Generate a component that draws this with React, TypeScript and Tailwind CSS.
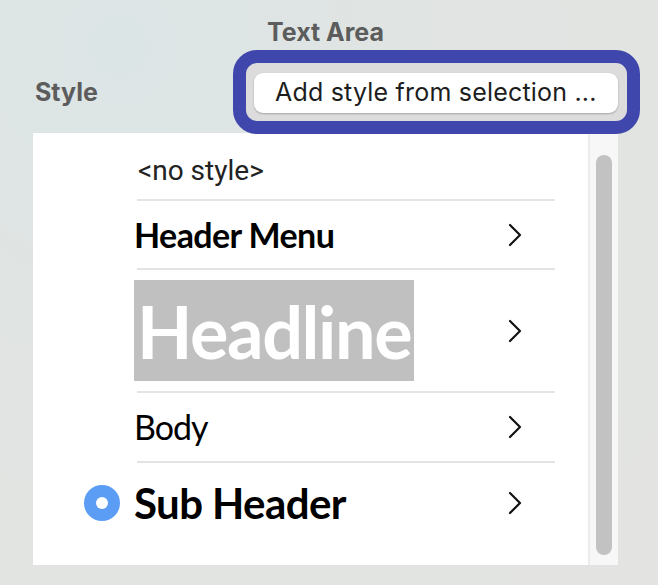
import React from "react";

const Chevron = () => (
  <svg width="14" height="24" viewBox="0 0 14 24" fill="none" className="mr-[33px] ml-auto shrink-0">
    <path d="M2 2 L12 12 L2 22" stroke="#111" strokeWidth="2.2" strokeLinecap="round" strokeLinejoin="round" />
  </svg>
);

const Separator = () => <div className="ml-[104px] h-[2px] w-[418px] bg-[#e4e4e4]" />;

const Row = ({
  children,
  className = "",
  chevron = true,
  radio = false,
}: {
  children: React.ReactNode;
  className?: string;
  chevron?: boolean;
  radio?: boolean;
}) => (
  <div className={`flex items-center ${className}`}>
    <div className="flex w-[101px] shrink-0 justify-end pr-[14px]">
      {radio && (
        <div className="flex h-[36px] w-[36px] items-center justify-center rounded-full bg-[#5b9cf5]">
          <div className="h-[12px] w-[12px] rounded-full bg-white" />
        </div>
      )}
    </div>
    <div className="flex w-[421px] items-center">
      {children}
      {chevron && <Chevron />}
    </div>
  </div>
);

export default function App() {
  return (
    <div className="relative h-[585px] w-[658px] overflow-hidden bg-[radial-gradient(ellipse_at_18%_8%,#dce5e6_0%,#e1e4e2_45%,#e3e4e2_100%)] font-['Inter',sans-serif]">
      <div className="pl-[267px] pt-[17px] text-[25px] font-bold leading-[30px] text-[#5c5c5c]">Text Area</div>

      <div className="mt-[3px] flex h-[84px] items-center">
        <div className="w-[233px] pl-[35px] pt-[2px] text-[25px] font-bold text-[#5c5c5c]">Style</div>
        <div className="relative z-10 h-[84px] w-[407px] rounded-[24px] border-[13px] border-[#3f47ac] bg-[#dcdcdc] pb-[7px] pl-[8px] pr-[9px] pt-[10px]">
          <div className="flex h-[40px] items-center rounded-[9px] bg-white pl-[21px] text-[25px] tracking-[0.2px] text-[#1d1d1d] shadow-[0_1px_2px_rgba(0,0,0,0.25)]">
            Add style from selection ...
          </div>
        </div>
      </div>

      <div className="-mt-[1px] ml-[33px] flex h-[432px] w-[585px] bg-white">
        <div className="flex w-[555px] flex-col font-['Lato',sans-serif] text-black">
          <Row chevron={false} className="h-[66px] pt-[10px]">
            <span className="pl-[4px] font-['Roboto',sans-serif] text-[28px] leading-none text-[#222]">&lt;no style&gt;</span>
          </Row>
          <Separator />
          <Row className="h-[67px]">
            <span className="text-[34px] font-bold leading-none tracking-[-0.6px]">Header Menu</span>
          </Row>
          <Separator />
          <Row className="h-[121px]">
            <span className="flex h-[101px] items-center bg-[#c0c0c0] px-[3px] text-[72px] font-bold leading-none tracking-[-1.4px] text-white">
              Headline
            </span>
          </Row>
          <Separator />
          <Row className="h-[68px]">
            <span className="text-[34px] leading-none tracking-[-1px]">Body</span>
          </Row>
          <Separator />
          <Row radio className="h-[80px]">
            <span className="text-[42px] font-bold leading-none tracking-[-0.6px]">Sub Header</span>
          </Row>
        </div>
        <div className="flex w-[30px] border-l-2 border-[#ececec] bg-[#f7f7f7] pb-[10px] pl-[6px] pt-[22px]">
          <div className="w-[16px] rounded-full bg-[#c2c2c2]" />
        </div>
      </div>
    </div>
  );
}
